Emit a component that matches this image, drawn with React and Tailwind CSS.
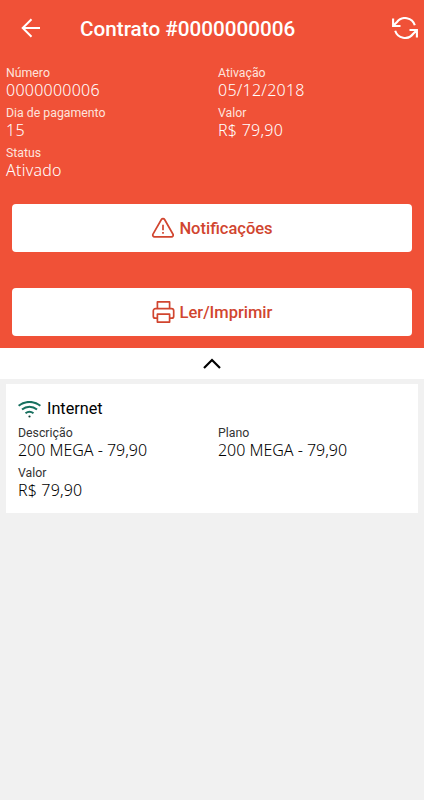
import clsx from "clsx"

function Field({ label, value, light, valueClass }) {
  return (
    <div className="h-10">
      <p className={clsx("pt-[2px] text-[12.3px] leading-[14px]", light ? "text-[#fde3dd]" : "text-[#333]")}>{label}</p>
      <p
        className={clsx(
          "font-['Noto_Sans',sans-serif] text-[16px] leading-5 font-light whitespace-nowrap",
          light ? "text-white" : "text-black",
          valueClass ?? "tracking-[0.25px]"
        )}
      >
        {value}
      </p>
    </div>
  )
}

function ActionButton({ icon, children }) {
  return (
    <button className="flex h-12 w-full items-center justify-center gap-[5px] rounded bg-white text-[16.5px] font-medium text-[#d1452f]">
      {icon}
      <span className="pt-[2px]">{children}</span>
    </button>
  )
}

function BackIcon() {
  return (
    <svg className="h-[20px] w-[20px]" viewBox="0 0 20 20" fill="none" stroke="currentColor" strokeWidth="2">
      <path d="M19 10H2M10.5 1.2L1.7 10l8.8 8.8" />
    </svg>
  )
}

function RefreshIcon() {
  return (
    <svg className="h-[22px] w-[26px]" viewBox="0 0 26 22" fill="none" stroke="currentColor" strokeWidth="2.1">
      <path d="M22.8 8.2A10.2 10.2 0 0 0 5 5L1.5 8.5M1.1 1.5V9H8.5" />
      <path d="M3.2 13.8A10.2 10.2 0 0 0 21 17L24.5 13.5M24.9 20.5V13H17.5" />
    </svg>
  )
}

function WarningIcon() {
  return (
    <svg className="h-[24px] w-[23px]" viewBox="0 0 23 24" fill="none" stroke="currentColor" strokeWidth="1.7" strokeLinejoin="round">
      <path d="M10.4 3.5 2 18.2a1.8 1.8 0 0 0 1.6 2.7h16.8a1.8 1.8 0 0 0 1.6-2.7L13.6 3.5a1.85 1.85 0 0 0-3.2 0z" />
      <path d="M12 8.7v5.6M12 16v1.8" />
    </svg>
  )
}

function PrinterIcon() {
  return (
    <svg className="h-[24px] w-[23px]" viewBox="0 0 23 24" fill="none" stroke="currentColor" strokeWidth="1.7" strokeLinejoin="round">
      <path d="M5.4 8.6V1.9h12.2v6.7" />
      <path d="M5.4 18.2H3.3a2 2 0 0 1-2-2v-5.400a2.200 2.200 0 0 1 2.200-2.200h16a2.200 2.200 0 0 1 2.200 2.200v5.400a2 2 0 0 1-2 2h-2.100" />
      <path d="M5.4 14.2h12.200v7.900H5.400z" />
    </svg>
  )
}

function WifiIcon() {
  return (
    <svg className="h-[17px] w-[23px]" viewBox="0 0 23 17" fill="none" stroke="#17705f" strokeWidth="2">
      <path d="M.6 4.8C7-.4 16-.4 22.4 4.8" />
      <path d="M4 8.6c4.5-3.7 10.5-3.7 15 0" />
      <path d="M7.5 12.3c2.4-1.9 5.6-1.9 8 0" />
      <circle cx="11.5" cy="15.5" r="1.1" fill="#0d3d35" stroke="none" />
    </svg>
  )
}

export default function App() {
  return (
    <div className="min-h-screen bg-[#f1f1f1] font-[Roboto,sans-serif]">
      <div className="h-[348px] bg-[#f05137]">
        <header className="flex h-14 items-center pr-[6px] pl-[21px] text-white">
          <BackIcon />
          <h1 className="ml-[39px] flex-1 pt-[3px] text-[20.7px] font-medium whitespace-nowrap">Contrato #0000000006</h1>
          <RefreshIcon />
        </header>

        <div className="grid grid-cols-[212px_1fr] pt-2 pl-1.5">
          <Field light label="Número" value="0000000006" />
          <Field light label="Ativação" value="05/12/2018" />
          <Field light label="Dia de pagamento" value="15" />
          <Field light label="Valor" value="R$ 79,90" />
          <Field light label="Status" value="Ativado" />
        </div>

        <div className="flex flex-col gap-9 px-3 pt-5">
          <ActionButton icon={<WarningIcon />}>Notificações</ActionButton>
          <ActionButton icon={<PrinterIcon />}>Ler/Imprimir</ActionButton>
        </div>
      </div>

      <div className="flex h-[31px] items-center justify-center bg-white">
        <svg className="h-[12px] w-[18px]" viewBox="0 0 18 12" fill="none" stroke="#000" strokeWidth="2.2">
          <path d="M1 10 9 2l8 8" />
        </svg>
      </div>

      <section className="mx-1.5 mt-[5px] h-[129px] bg-white pt-[13px] pl-3">
        <div className="flex h-6 items-center gap-1.5">
          <WifiIcon />
          <h2 className="text-[16.2px] text-black">Internet</h2>
        </div>
        <div className="grid grid-cols-[200px_1fr] pt-[3px]">
          <Field label="Descrição" value="200 MEGA - 79,90" valueClass="tracking-[-0.02px]" />
          <Field label="Plano" value="200 MEGA - 79,90" valueClass="tracking-[-0.02px]" />
          <Field label="Valor" value="R$ 79,90" valueClass="tracking-[0.15px]" />
        </div>
      </section>
    </div>
  )
}
